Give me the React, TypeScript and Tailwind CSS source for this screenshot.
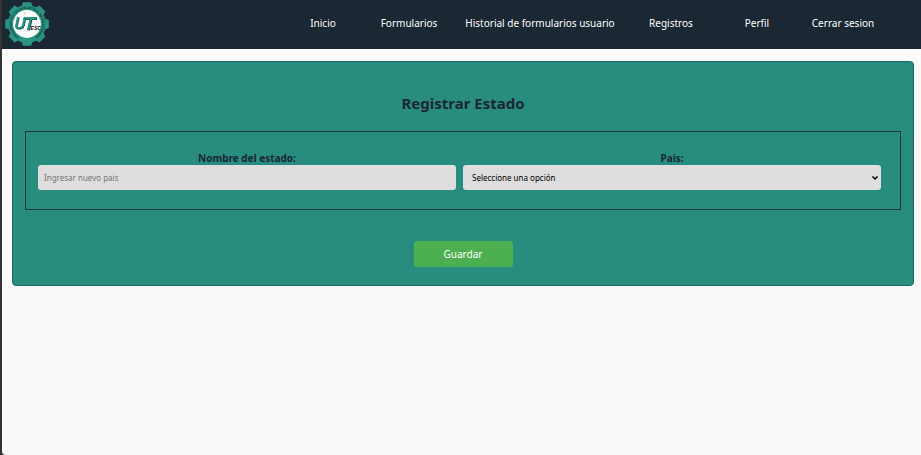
import React from "react";
import { ChevronDown } from "lucide-react";

const TEETH = [0, 45, 90, 135, 180, 225, 270, 315];

const NAV_ITEMS = [
  { label: "Inicio", width: "w-[86px]" },
  { label: "Formularios", width: "w-[86px]" },
  { label: "Historial de formularios usuario", width: "w-[176px]" },
  { label: "Registros", width: "w-[86px]" },
  { label: "Perfil", width: "w-[86px]" },
  { label: "Cerrar sesion", width: "w-[86px]" },
];

function Logo() {
  return (
    <svg viewBox="0 0 44 44" className="h-11 w-11 shrink-0" role="img" aria-label="UTESC">
      <defs>
        <path id="ring" d="M22 37.2 A15.2 15.2 0 1 1 22.1 37.2" />
      </defs>
      <g fill="#2a9482">
        {TEETH.map((angle) => (
          <path key={angle} d="M16.4 5 L17.8 0.2 H26.2 L27.6 5 Z" transform={`rotate(${angle} 22 22)`} />
        ))}
        <circle cx="22" cy="22" r="19" />
      </g>
      <circle cx="22" cy="22" r="13.9" fill="#fff" />
      <text fill="#12383a" fontFamily="'Liberation Sans', sans-serif" fontWeight="700" fontSize="3.5">
        <textPath href="#ring" startOffset="50%" textAnchor="middle">
          UNIVERSIDAD TECNOLÓGICA DE ESCUINAPA
        </textPath>
      </text>
      <g fill="none" strokeLinejoin="round">
        <path d="M13.4 15.4 L11.7 23.4 Q11.1 26.3 13.8 26.3 H15.4 Q17.9 26.3 18.5 23.6 L20.2 15.4" stroke="#24404a" strokeWidth="2.4" />
        <path d="M13 15 L11.3 23 Q10.7 25.9 13.4 25.9 H15 Q17.4 25.9 18 23.2 L19.7 15" stroke="#1f9c86" strokeWidth="1.9" />
        <path d="M21.2 16.6 H32 M26.3 16.8 L23.6 28.4" stroke="#24404a" strokeWidth="2.8" />
        <path d="M21.2 16.1 H31.6 M25.8 16.4 L23.1 28" stroke="#1f9c86" strokeWidth="2.2" />
      </g>
      <circle cx="19.8" cy="11.6" r="1" fill="#e6cf9b" />
      <text x="25.6" y="27.8" fill="#111" fontFamily="'Liberation Sans', sans-serif" fontStyle="italic" fontWeight="700" fontSize="5">
        ESC
      </text>
    </svg>
  );
}

export default function App() {
  return (
    <div className="min-h-screen bg-[#333333] pl-0.5 font-['Noto_Sans',sans-serif] text-[#1b2733]">
      <div className="min-h-screen rounded-bl bg-[#fafafa]">
        <header className="flex h-[49px] items-center justify-between bg-[#1b2733] pr-[35px] pb-px pl-[3px]">
          <Logo />
          <nav className="flex pb-0.5">
            {NAV_ITEMS.map((item) => (
              <a key={item.label} href="#" className={`${item.width} text-center text-[10px] leading-4 whitespace-nowrap text-white`}>
                {item.label}
              </a>
            ))}
          </nav>
        </header>

        <main className="pt-3 pr-[7px] pl-2.5">
          <form className="flex flex-col rounded border border-[#1b6a65] bg-[#288c7f] px-3 pt-[31px] pb-[18px]">
            <h1 className="text-center text-[15px] leading-5 font-bold">Registrar Estado</h1>
            <div className="mt-[18px] grid grid-cols-2 gap-[7px] border border-[#1b3440] pt-5 pr-[19px] pb-[19px] pl-3">
              <div className="flex flex-col">
                <label htmlFor="estado" className="text-center text-[10px] leading-[13px] font-bold">
                  Nombre del estado:
                </label>
                <input
                  id="estado"
                  type="text"
                  placeholder="Ingresar nuevo pais"
                  className="h-[25px] w-full rounded-[3px] bg-[#dedede] px-1.5 text-[8px] placeholder:text-[#757575]"
                />
              </div>
              <div className="flex flex-col">
                <label htmlFor="pais" className="text-center text-[10px] leading-[13px] font-bold">
                  Pais:
                </label>
                <div className="relative">
                  <select
                    id="pais"
                    className="block h-[25px] w-full appearance-none rounded-[3px] bg-[#dedede] pr-4 pl-[9px] text-[8px] text-black"
                  >
                    <option>Seleccione una opción</option>
                  </select>
                  <ChevronDown
                    aria-hidden="true"
                    strokeWidth={5}
                    className="pointer-events-none absolute top-[9px] right-0.5 h-2 w-2 text-black"
                  />
                </div>
              </div>
            </div>
            <button type="button" className="mt-[31px] h-[26px] w-[99px] self-center rounded-[3px] bg-[#4caf50] text-[10px] text-white">
              Guardar
            </button>
          </form>
        </main>
      </div>
    </div>
  );
}
